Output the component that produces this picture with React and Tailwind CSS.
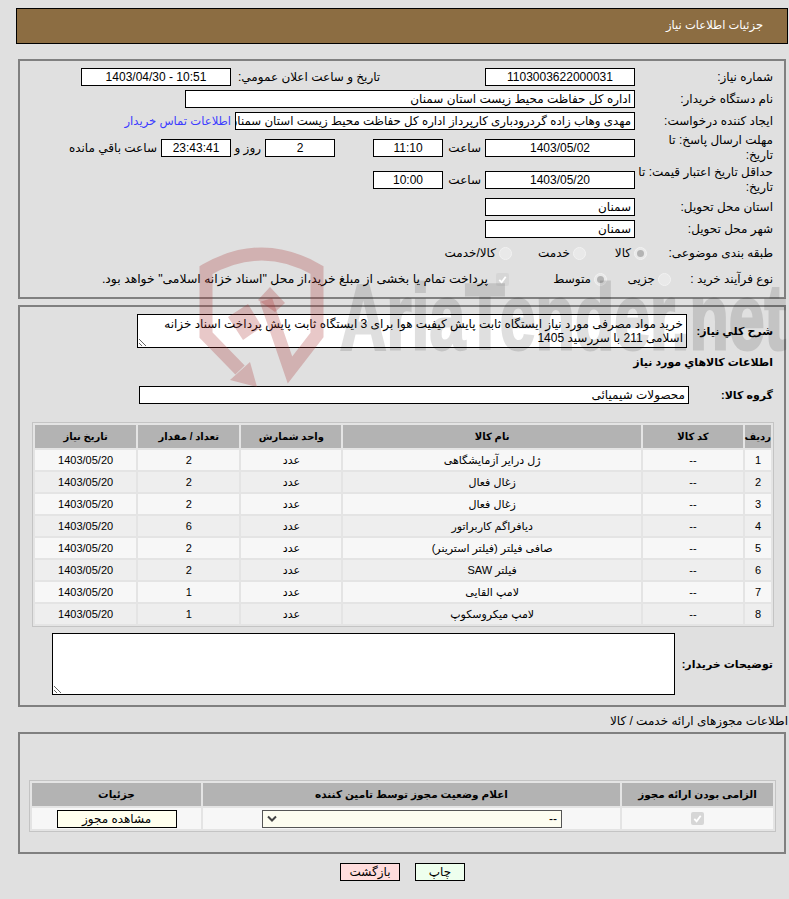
const rows = [
  ["1", "--", "ژل درایر آزمایشگاهی", "عدد", "2", "1403/05/20"],
  ["2", "--", "زغال فعال", "عدد", "2", "1403/05/20"],
  ["3", "--", "زغال فعال", "عدد", "2", "1403/05/20"],
  ["4", "--", "دیافراگم کاربراتور", "عدد", "6", "1403/05/20"],
  ["5", "--", "صافی فیلتر (فیلتر استرینر)", "عدد", "2", "1403/05/20"],
  ["6", "--", "فیلتر SAW", "عدد", "2", "1403/05/20"],
  ["7", "--", "لامپ القایی", "عدد", "1", "1403/05/20"],
  ["8", "--", "لامپ میکروسکوپ", "عدد", "1", "1403/05/20"],
];

function Field({ className = "", children }) {
  return (
    <div className={`h-[18px] shrink-0 overflow-hidden whitespace-nowrap border border-black bg-white px-[3px] leading-[16px] ${className}`}>
      {children}
    </div>
  );
}

function Radio({ checked }) {
  return (
    <span className="flex h-[13px] w-[13px] shrink-0 items-center justify-center rounded-full border border-[#f2f2f2] bg-[#e9e9e9]">
      {checked && <span className="h-[7px] w-[7px] rounded-full bg-[#b4b4b4]" />}
    </span>
  );
}

function Check({ className = "" }) {
  return (
    <span className={`flex h-[13px] w-[13px] items-center justify-center rounded-[2px] bg-[#d6d6d6] ${className}`}>
      <svg viewBox="0 0 12 12" className="h-[11px] w-[11px]">
        <path d="M2.5 6.5 5 9l4.5-6" fill="none" stroke="#fff" strokeWidth="2" />
      </svg>
    </span>
  );
}

function Watermark() {
  return (
    <svg className="pointer-events-none absolute left-0 top-0" width="789" height="899" viewBox="0 0 789 899">
      <g fill="#a82c2c" fillOpacity="0.26">
        <path
          d="M266 300 290 370 317 335V270Q262 238 206 270V335L240 370"
          fill="none"
          stroke="#a82c2c"
          strokeOpacity="0.26"
          strokeWidth="13"
        />
        <polygon points="230,380 250,362 257,387" />
        <polygon points="228,317 243,340 262,327 248,304" />
        <polygon points="258,300 270,287 285,303 275,312" />
      </g>
      <g opacity="0.12">
        <text
          x="340"
          y="349"
          fontFamily="Liberation Sans"
          fontWeight="700"
          fontSize="93"
          textLength="446"
          lengthAdjust="spacingAndGlyphs"
          direction="ltr"
          fill="#000"
          stroke="#000"
          strokeWidth="3"
        >
          AriaTender.net
        </text>
      </g>
    </svg>
  );
}

export default function App() {
  return (
    <div dir="rtl" className="relative h-[899px] overflow-hidden bg-[#e0e0e0] pr-px pt-2 text-[12px] text-black [font-family:'Liberation_Sans','DejaVu_Sans',sans-serif]">
      {/* Header */}
      <div className="ml-4 flex h-9 items-center border border-black bg-[#8c6d42] pr-6 text-[11.5px] text-white">جزئیات اطلاعات نیاز</div>

      {/* اطلاعات نیاز */}
      <div className="ml-[18px] mr-0.5 mt-[15px] h-[240px] border-2 border-[#808080] pr-[11px] pt-[7px]">
        <div className="flex h-[18px] items-center">
          <div className="w-[138px] shrink-0">شماره نیاز:</div>
          <Field className="w-[150px] text-center">1103003622000031</Field>
          <div className="w-[254px] shrink-0 pl-[7px] text-left">تاریخ و ساعت اعلان عمومي:</div>
          <Field className="w-[150px] text-center">
            <span dir="ltr">1403/04/30 - 10:51</span>
          </Field>
        </div>
        <div className="mt-1 flex h-[18px] items-center">
          <div className="w-[138px] shrink-0">نام دستگاه خریدار:</div>
          <Field className="w-[450px]">اداره کل حفاظت محیط زیست استان سمنان</Field>
        </div>
        <div className="mt-1 flex h-[18px] items-center">
          <div className="w-[138px] shrink-0">ایجاد کننده درخواست:</div>
          <Field className="w-[400px] text-[11.8px]">مهدی وهاب زاده گردرودباری کارپرداز اداره کل حفاظت محیط زیست استان سمنان</Field>
          <a className="mr-1 whitespace-nowrap text-[11.6px] text-[#3c3cff]">اطلاعات تماس خریدار</a>
        </div>
        <div className="mt-1 flex h-7 items-center">
          <div className="w-[138px] shrink-0 pl-5 leading-[15px]">مهلت ارسال پاسخ: تا تاریخ:</div>
          <Field className="w-[150px] text-center">1403/05/02</Field>
          <div className="w-[42px] shrink-0 pr-1">ساعت</div>
          <Field className="w-[70px] text-center">11:10</Field>
          <div className="w-[38px] shrink-0" />
          <Field className="w-[70px] text-center">2</Field>
          <div className="w-[34px] shrink-0 pr-1">روز و</div>
          <Field className="w-[70px] bg-[#ffffee] text-center">23:43:41</Field>
          <div className="whitespace-nowrap pr-1">ساعت باقي مانده</div>
        </div>
        <div className="mt-1 flex h-7 items-center">
          <div className="w-[138px] shrink-0 leading-[15px]">حداقل تاریخ اعتبار قیمت: تا تاریخ:</div>
          <Field className="w-[150px] text-center">1403/05/20</Field>
          <div className="w-[42px] shrink-0 pr-1">ساعت</div>
          <Field className="w-[70px] text-center">10:00</Field>
        </div>
        <div className="mt-1 flex h-[18px] items-center">
          <div className="w-[138px] shrink-0">استان محل تحویل:</div>
          <Field className="w-[150px]">سمنان</Field>
        </div>
        <div className="mt-1 flex h-[18px] items-center">
          <div className="w-[138px] shrink-0">شهر محل تحویل:</div>
          <Field className="w-[150px]">سمنان</Field>
        </div>
        <div className="mt-1 flex h-[22px] items-center">
          <div className="w-[126px] shrink-0 whitespace-nowrap">طبقه بندی موضوعی:</div>
          <Radio checked />
          <span className="mr-[3px] w-[45px]">کالا</span>
          <Radio />
          <span className="mr-[3px] w-[58px]">خدمت</span>
          <Radio />
          <span className="mr-[3px]">کالا/خدمت</span>
        </div>
        <div className="mt-1 flex h-[22px] items-center">
          <div className="w-[102px] shrink-0 whitespace-nowrap">نوع فرآیند خرید :</div>
          <Radio />
          <span className="mr-[3px] w-[48px]">جزیی</span>
          <Radio checked />
          <span className="mr-[3px] w-[82px]">متوسط</span>
          <Check />
          <span className="mr-2 whitespace-nowrap text-[12.4px]">پرداخت تمام یا بخشی از مبلغ خرید،از محل "اسناد خزانه اسلامی" خواهد بود.</span>
        </div>
      </div>

      {/* شرح و کالاها */}
      <div className="ml-[18px] mr-0.5 mt-1.5 h-[402px] border-2 border-[#808080] pt-[7px]">
        <div className="flex pr-[11px]">
          <div className="flex w-[86px] shrink-0 items-center whitespace-nowrap text-[11px] font-bold">شرح کلي نیاز:</div>
          <textarea
            readOnly
            dir="rtl"
            className="h-[34px] w-[550px] resize overflow-hidden border border-black bg-white px-[3px] pt-0.5 leading-[14px] outline-none"
            defaultValue="خرید مواد مصرفی مورد نیاز ایستگاه ثابت پایش کیفیت هوا برای 3 ایستگاه ثابت پایش پرداخت اسناد خزانه اسلامی 211 با سررسید 1405"
          />
        </div>
        <div className="mt-[5px] pr-[11px] text-[11px] font-bold leading-[18px]">اطلاعات کالاهاي مورد نیاز</div>
        <div className="mt-[15px] flex items-center pr-[11px]">
          <div className="w-[84px] shrink-0 text-[11px] font-bold leading-[18px]">گروه کالا:</div>
          <Field className="w-[550px]">محصولات شیمیائی</Field>
        </div>
        <table className="mr-[10px] mt-[18px] w-[742px] table-fixed border-separate border-spacing-[2px] border border-[#c4c4c4] bg-[#e4e4e4]">
          <colgroup>
            <col className="w-[26px]" />
            <col className="w-[100px]" />
            <col className="w-[297px]" />
            <col className="w-[100px]" />
            <col className="w-[101px]" />
            <col className="w-[101px]" />
          </colgroup>
          <thead>
            <tr className="h-[23px] bg-[#b3b3b3] text-[10px]">
              <th className="font-bold">ردیف</th>
              <th className="font-bold">کد کالا</th>
              <th className="font-bold">نام کالا</th>
              <th className="font-bold">واحد شمارش</th>
              <th className="font-bold">تعداد / مقدار</th>
              <th className="font-bold">تاریخ نیاز</th>
            </tr>
          </thead>
          <tbody className="text-[11px]">
            {rows.map((row, i) => (
              <tr key={row[0]} className={i % 2 === 0 ? "h-5 bg-[#f7f7f7]" : "h-5 bg-[#eeeeee]"}>
                {row.map((cell, j) => (
                  <td key={j} className="p-0 text-center">
                    {cell}
                  </td>
                ))}
              </tr>
            ))}
          </tbody>
        </table>
        <div className="mt-1.5 flex pr-[11px]">
          <div className="flex w-[98px] shrink-0 items-center whitespace-nowrap text-[11px] font-bold">توضیحات خریدار:</div>
          <textarea readOnly className="h-[62px] w-[623px] resize border border-black bg-white outline-none" />
        </div>
      </div>

      <div className="mt-[5px] h-5 leading-[18px]">اطلاعات مجوزهای ارائه خدمت / کالا</div>

      {/* مجوزها */}
      <div className="ml-[18px] mr-0.5 h-[122px] border-2 border-[#808080] pt-[46px]">
        <table className="mr-[8px] w-[747px] table-fixed border-separate border-spacing-[2px] border border-[#c4c4c4] bg-[#e4e4e4]">
          <colgroup>
            <col className="w-[151px]" />
            <col className="w-[417px]" />
            <col className="w-[169px]" />
          </colgroup>
          <thead>
            <tr className="h-[23px] bg-[#b3b3b3] text-[10.5px]">
              <th className="font-bold">الزامی بودن ارائه مجوز</th>
              <th className="font-bold">اعلام وضعیت مجوز توسط تامین کننده</th>
              <th className="font-bold">جزئیات</th>
            </tr>
          </thead>
          <tbody>
            <tr className="h-[21px] bg-[#f7f7f7]">
              <td className="p-0">
                <Check className="mx-auto" />
              </td>
              <td className="p-0">
                <div className="mr-[58px] flex h-[18px] w-[300px] items-center justify-between border border-[#555] bg-[#fdfdf0] px-1">
                  <span>--</span>
                  <svg viewBox="0 0 10 8" className="h-2 w-[10px]">
                    <path d="M1 1.5 5 5.5 9 1.5" fill="none" stroke="#444" strokeWidth="2" />
                  </svg>
                </div>
              </td>
              <td className="p-0">
                <div className="mx-auto h-[18px] w-[120px] border border-black bg-[#ffffee] text-center leading-[16px]">مشاهده مجوز</div>
              </td>
            </tr>
          </tbody>
        </table>
      </div>

      <div className="mt-[9px] flex justify-center gap-[15px] pl-[17px]">
        <button className="h-[18px] w-[50px] border border-black bg-[#eeffee] leading-[16px]">چاپ</button>
        <button className="h-[18px] w-[60px] border border-black bg-[#ffdddd] leading-[16px]">بازگشت</button>
      </div>

      <Watermark />
    </div>
  );
}
